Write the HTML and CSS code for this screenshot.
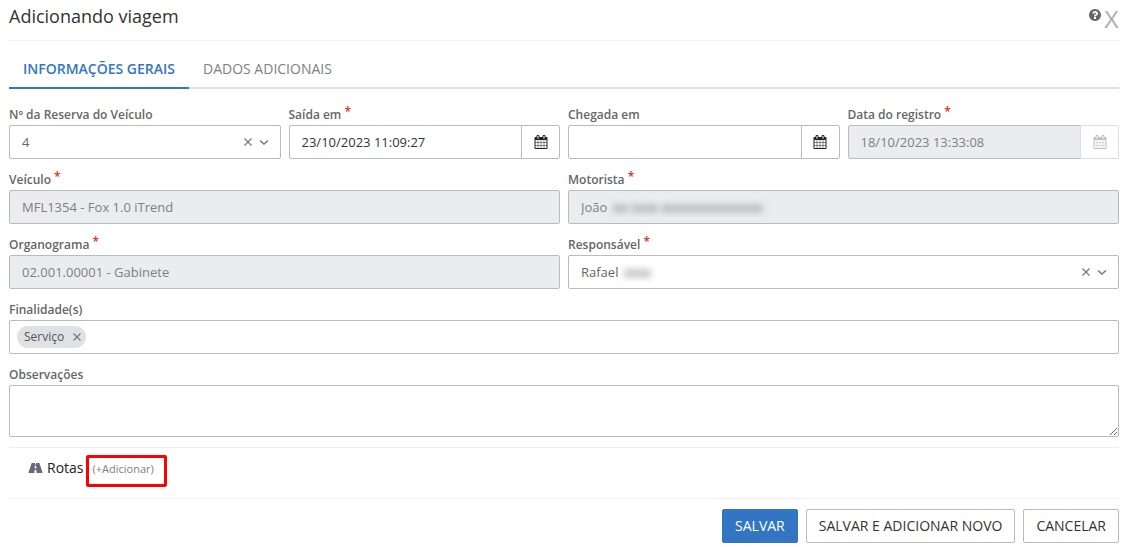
FILE: index.html
```html
<!DOCTYPE html>
<html lang="pt-BR">
<head>
<meta charset="utf-8">
<meta name="viewport" content="width=device-width, initial-scale=1">
<title>Adicionando viagem</title>
<link rel="stylesheet" href="styles.css">
</head>
<body>
<svg class="sprite" aria-hidden="true">
  <symbol id="calendar" viewBox="0 0 1792 1792"><path d="M192 1664h288v-288h-288v288zm352 0h320v-288h-320v288zm-352-352h288v-320h-288v320zm352 0h320v-320h-320v320zm-352-384h288v-288h-288v288zm736 736h320v-288h-320v288zm-384-736h320v-288h-320v288zm768 736h288v-288h-288v288zm-384-352h320v-320h-320v320zm-352-864v-288q0-13-9.5-22.5t-22.5-9.5h-64q-13 0-22.5 9.5t-9.5 22.5v288q0 13 9.5 22.5t22.5 9.500h64q13 0 22.5-9.5t9.5-22.5zm736 864h288v-320h-288v320zm-384-384h320v-288h-320v288zm384 0h288v-288h-288v288zm32-480v-288q0-13-9.5-22.5t-22.5-9.500h-64q-13 0-22.5 9.500t-9.500 22.500v288q0 13 9.500 22.500t22.500 9.500h64q13 0 22.500-9.500t9.500-22.500zm384-64v1280q0 52-38 90t-90 38h-1408q-52 0-90-38t-38-90v-1280q0-52 38-90t90-38h128v-96q0-66 47-113t113-47h64q66 0 113 47t47 113v96h384v-96q0-66 47-113t113-47h64q66 0 113 47t47 113v96h128q52 0 90 38t38 90z"/></symbol>
  <symbol id="cross" viewBox="0 0 10 10"><path d="M1.500 1.500l7 7M8.500 1.500l-7 7" fill="none" stroke="currentColor" stroke-width="1.200"/></symbol>
  <symbol id="chevron" viewBox="0 0 10 10"><path d="M1 3.500l4 3.500 4-3.500" fill="none" stroke="currentColor" stroke-width="1.500"/></symbol>
</svg>
<main class="dialog">
  <header class="dialog-header">
    <h1 class="title">Adicionando viagem</h1>
    <div class="header-actions">
      <button class="icon-button help" type="button" aria-label="Ajuda"><svg class="icon-help" viewBox="128 128 1536 1536"><path d="M1024 1376v-192q0-14-9-23t-23-9h-192q-14 0-23 9t-9 23v192q0 14 9 23t23 9h192q14 0 23-9t9-23zm256-672q0-88-55.5-163t-138.5-116-170-41q-243 0-371 213-15 24 8 42l132 100q7 6 19 6 16 0 25-12 53-68 86-92 34-24 86-24 48 0 85.5 26t37.5 59q0 38-20 61t-68 45q-63 28-115.5 86.5t-52.5 125.5v36q0 14 9 23t23 9h192q14 0 23-9t9-23q0-19 21.5-49.5t54.5-49.5q32-18 49-28.5t46-35 44.5-48 28-60.5 12.5-81zm384 192q0 209-103 385.5t-279.5 279.5-385.5 103-385.5-103-279.5-279.5-103-385.5 103-385.5 279.5-279.5 385.5-103 385.5 103 279.5 279.5 103 385.5z"/></svg></button>
      <button class="icon-button close" type="button" aria-label="Fechar">X</button>
    </div>
  </header>
  <nav class="tabs">
    <a class="tab tab-active" href="#gerais">INFORMAÇÕES GERAIS</a>
    <a class="tab" href="#adicionais">DADOS ADICIONAIS</a>
  </nav>
  <form class="form" id="gerais">
    <div class="field">
      <label class="label" for="reserva">Nº da Reserva do Veículo</label>
      <div class="control">
        <select class="input" id="reserva"><option>4</option></select>
        <span class="select-tools"><button class="icon-button" type="button" aria-label="Limpar"><svg class="icon-small"><use href="#cross"/></svg></button><svg class="icon-small"><use href="#chevron"/></svg></span>
      </div>
    </div>
    <div class="field">
      <label class="label" for="saida">Saída em <span class="required">*</span></label>
      <div class="group">
        <input class="input input-dark" id="saida" type="text" value="23/10/2023 11:09:27">
        <button class="addon" type="button" aria-label="Abrir calendário"><svg class="icon"><use href="#calendar"/></svg></button>
      </div>
    </div>
    <div class="field">
      <label class="label" for="chegada">Chegada em</label>
      <div class="group">
        <input class="input input-dark" id="chegada" type="text">
        <button class="addon" type="button" aria-label="Abrir calendário"><svg class="icon"><use href="#calendar"/></svg></button>
      </div>
    </div>
    <div class="field">
      <label class="label" for="registro">Data do registro <span class="required">*</span></label>
      <div class="group">
        <input class="input" id="registro" type="text" value="18/10/2023 13:33:08" disabled>
        <button class="addon" type="button" aria-label="Abrir calendário" disabled><svg class="icon"><use href="#calendar"/></svg></button>
      </div>
    </div>
    <div class="field field-half">
      <label class="label" for="veiculo">Veículo <span class="required">*</span></label>
      <input class="input" id="veiculo" type="text" value="MFL1354 - Fox 1.0 iTrend" disabled>
    </div>
    <div class="field field-half">
      <label class="label" for="motorista">Motorista <span class="required">*</span></label>
      <div class="control">
        <input class="input" id="motorista" type="text" value="João" disabled>
        <span class="redacted redacted-driver" aria-hidden="true"><i class="smudge smudge-s"></i><i class="smudge smudge-m"></i><i class="smudge smudge-l"></i></span>
      </div>
    </div>
    <div class="field field-half">
      <label class="label" for="organograma">Organograma <span class="required">*</span></label>
      <input class="input" id="organograma" type="text" value="02.001.00001 - Gabinete" disabled>
    </div>
    <div class="field field-half">
      <label class="label" for="responsavel">Responsável <span class="required">*</span></label>
      <div class="control">
        <select class="input" id="responsavel"><option>Rafael</option></select>
        <span class="redacted redacted-owner" aria-hidden="true"><i class="smudge smudge-m"></i></span>
        <span class="select-tools"><button class="icon-button" type="button" aria-label="Limpar"><svg class="icon-small"><use href="#cross"/></svg></button><svg class="icon-small"><use href="#chevron"/></svg></span>
      </div>
    </div>
    <div class="field field-full">
      <label class="label" for="finalidade">Finalidade(s)</label>
      <div class="tag-box">
        <span class="tag">Serviço<button class="icon-button" type="button" aria-label="Remover Serviço"><svg class="icon-small"><use href="#cross"/></svg></button></span>
        <input class="tag-input" id="finalidade" type="text">
      </div>
    </div>
    <div class="field field-full">
      <label class="label" for="observacoes">Observações</label>
      <textarea class="input textarea" id="observacoes"></textarea>
    </div>
  </form>
  <section class="routes">
    <svg class="icon-road" viewBox="0 0 14 10"><path fill-rule="evenodd" d="M3.200 0H6.500L6.400 1.500H7.600L7.500 0H10.800L14 9.300Q14 10 13.400 10H8.100L7.900 7H6.100L5.900 10H.6Q0 10 0 9.300ZM6.300 2.700L6.100 5.600H7.900L7.700 2.700Z"/></svg>
    <h2 class="routes-title">Rotas</h2>
    <a class="add-link" href="#rotas">(+Adicionar)</a>
  </section>
  <footer class="footer">
    <button class="button button-primary" type="button">SALVAR</button>
    <button class="button" type="button">SALVAR E ADICIONAR NOVO</button>
    <button class="button" type="button">CANCELAR</button>
  </footer>
</main>
</body>
</html>
```
FILE: styles.css
```css
* { box-sizing: border-box; }
body {
  margin: 0;
  background: #fff;
  color: #333;
  font: 13px/20px "Open Sans", sans-serif;
}
button, input, select, textarea { font: inherit; color: inherit; }
.sprite { position: absolute; width: 0; height: 0; }
.dialog { padding: 0 10px 0 9px; }
.dialog-header {
  display: flex;
  justify-content: space-between;
  height: 41px;
  border-bottom: 1px solid #f3f3f3;
}
.title { margin: 0; font-size: 18px; font-weight: 400; line-height: 33px; color: #333; }
.header-actions { display: flex; align-items: flex-start; gap: 3px; padding-top: 9px; }
.icon-button {
  display: inline-flex;
  padding: 0;
  border: 0;
  background: none;
  color: #777;
  cursor: pointer;
}
.icon-help { width: 12px; height: 12px; fill: #666; }
.close { font: 23px/23px "Liberation Sans", sans-serif; color: #b0b0b0; }
.tabs {
  display: flex;
  margin-top: 9px;
  box-shadow: inset 0 -2px #e0e1e8;
}
.tab {
  padding: 9px 14px 8px;
  border-bottom: 2px solid transparent;
  font-size: 14px;
  line-height: 20px;
  color: #808080;
  text-decoration: none;
}
.tab-active { border-color: #3276c3; color: #3276c3; font-weight: 600; }
.form {
  display: grid;
  grid-template-columns: repeat(4, minmax(0, 1fr));
  gap: 11px 8px;
  padding: 16px 0 10px;
}
.field-half { grid-column: span 2; }
.field-full { grid-column: 1 / -1; }
.label { display: block; font-size: 12px; font-weight: 600; line-height: 20px; color: #666; }
.required { color: #e02b20; font-size: 12px; line-height: 10px; vertical-align: 3px; }
.input {
  display: block;
  width: 100%;
  height: 34px;
  padding: 0 12px;
  border: 1px solid #bbb;
  border-radius: 2px;
  background: #fff;
  color: #666;
  appearance: none;
}
.input-dark { color: #333; }
.input:disabled { background: #ebecf0; color: #808080; opacity: 1; }
.control { position: relative; }
.select-tools {
  position: absolute;
  top: 0;
  right: 12px;
  height: 34px;
  display: flex;
  align-items: center;
  gap: 6px;
  color: #777;
}
.icon-small { width: 10px; height: 10px; }
.group { display: flex; }
.group .input { flex: 1; min-width: 0; border-radius: 2px 0 0 2px; }
.addon {
  display: flex;
  align-items: center;
  justify-content: center;
  width: 39px;
  height: 34px;
  margin-left: -1px;
  padding: 0;
  border: 1px solid #bbb;
  border-radius: 0 2px 2px 0;
  background: #fff;
  color: #222;
}
.addon:disabled { border-color: #ddd; color: #b9c4b9; }
.icon { width: 14px; height: 14px; fill: currentColor; }
.redacted {
  position: absolute;
  top: 9px;
  height: 18px;
  display: flex;
  align-items: center;
  gap: 3px;
  overflow: hidden;
}
.redacted-driver { left: 41px; width: 160px; padding: 0 4px; }
.redacted-owner { left: 52px; width: 36px; padding: 0 4px; }
.smudge { height: 9px; background: #999; opacity: .5; filter: blur(3px); }
.smudge-s { width: 15px; }
.smudge-m { width: 27px; }
.smudge-l { width: 102px; }
.tag-box {
  display: flex;
  align-items: center;
  height: 34px;
  padding: 0 7px;
  border: 1px solid #bbb;
  border-radius: 2px;
}
.tag {
  display: flex;
  align-items: center;
  gap: 8px;
  height: 22px;
  padding: 0 4px 0 7px;
  border-radius: 11px;
  background: #e0e1e5;
  color: #555;
  font-size: 12px;
}
.tag-input { flex: 1; min-width: 0; border: 0; outline: 0; background: none; }
.textarea { height: 52px; padding: 6px 12px; resize: vertical; }
.routes {
  display: flex;
  align-items: center;
  height: 51px;
  padding: 0 19px 10px;
  border-top: 1px solid #eee;
}
.icon-road { width: 15px; height: 10px; margin-right: 4px; fill: #666a78; }
.routes-title { margin: 0 2px 0 0; font-size: 14px; font-weight: 400; color: #222; }
.add-link {
  margin-top: 5px;
  padding: 2px 10px 6px 4px;
  border: 3px solid #f00;
  border-radius: 2px;
  font-size: 11px;
  line-height: 18px;
  color: #808080;
  text-decoration: none;
}
.footer {
  display: flex;
  justify-content: flex-end;
  gap: 8px;
  padding-top: 10px;
  border-top: 1px solid #f3f3f3;
}
.button {
  height: 34px;
  padding: 0 12px;
  border: 1px solid #bbb;
  border-radius: 2px;
  background: #fff;
  color: #333;
  font-size: 14px;
}
.button-primary { border-color: #3276c3; background: #3276c3; color: #fff; font-weight: 500; }
```
